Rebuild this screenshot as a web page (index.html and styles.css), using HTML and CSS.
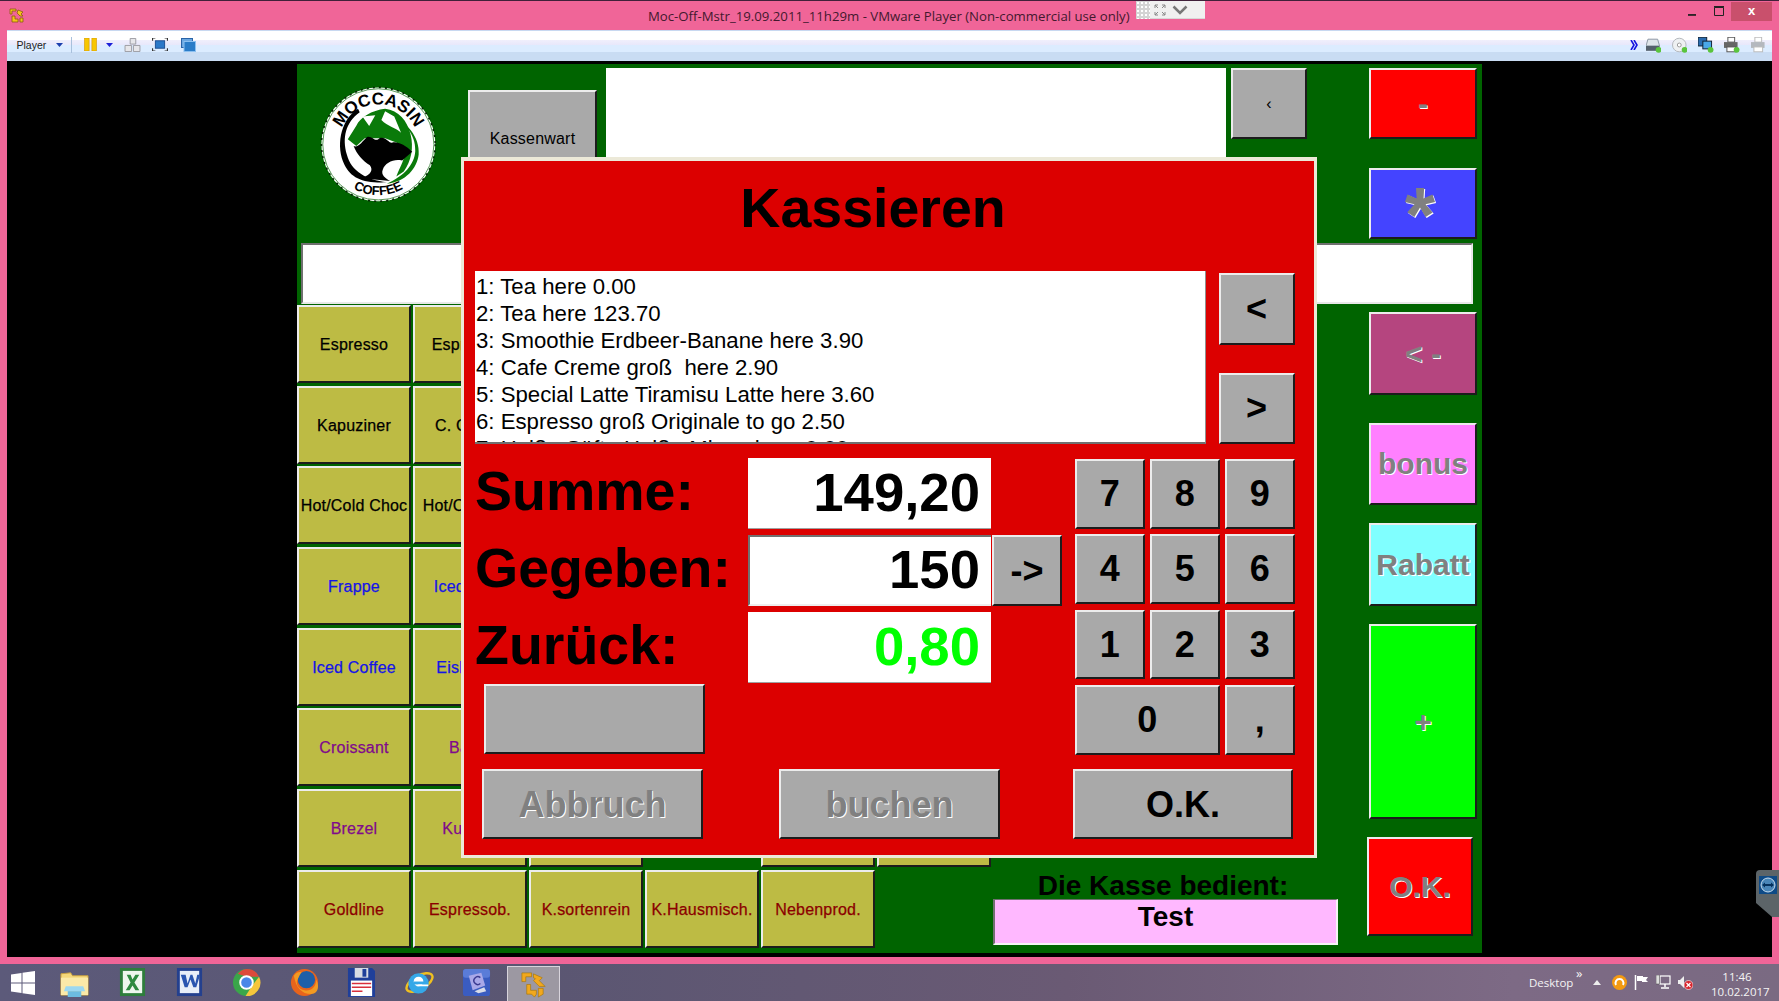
FILE: index.html
```html
<!DOCTYPE html>
<html lang="de">
<head>
<meta charset="utf-8">
<title>Kassieren</title>
<link rel="stylesheet" href="styles.css">
</head>
<body>
<div class="window">
  <header class="titlebar">
    <svg class="app-icon" viewBox="0 0 15 15"><path d="M1 1h6v2H3v3H1zM9 2l5 2-2 2 2 2h-3L8 5zM3 8h3v3h3v3H3zM11 10h3v4h-3z" fill="#f5c518" stroke="#8a5a10" stroke-width=".8"/></svg>
    <span class="title-text">Moc-Off-Mstr_19.09.2011_11h29m - VMware Player (Non-commercial use only)</span>
    <div class="win-controls">
      <svg class="win-min" viewBox="0 0 9 3"><rect width="9" height="2" y="1" fill="#222"/></svg>
      <svg class="win-max" viewBox="0 0 10 10"><path d="M.5 1.5h9v8h-9z" fill="none" stroke="#222"/><path d="M0 .5h10" stroke="#222" stroke-width="2"/></svg>
      <div class="win-close">x</div>
    </div>
    <div class="fs-widget">
      <div class="fs-grip"></div>
      <svg class="fs-expand" viewBox="0 0 12 12"><path d="M1 4V1h3M8 1h3v3M11 8v3H8M4 11H1V8M1 1l3 3M11 1L8 4M11 11L8 8M1 11l3-3" fill="none" stroke="#888"/></svg>
      <svg class="fs-chevron" viewBox="0 0 16 10"><path d="M1.500 1.500L8 8l6.500-6.500" fill="none" stroke="#777" stroke-width="2.500"/></svg>
    </div>
  </header>

  <nav class="toolbar">
    <span class="player-label">Player</span>
    <svg class="tb-caret" viewBox="0 0 7 4"><path d="M0 0h7L3.500 4z" fill="#1c3fae"/></svg>
    <span class="tb-sep"></span>
    <svg class="tb-pause" viewBox="0 0 13 14"><rect width="5" height="14" fill="#f7c600" stroke="#d09000" stroke-width=".6"/><rect x="8" width="5" height="14" fill="#f7c600" stroke="#d09000" stroke-width=".6"/></svg>
    <svg class="tb-caret tb-caret-2" viewBox="0 0 7 4"><path d="M0 0h7L3.500 4z" fill="#1c1fd8"/></svg>
    <svg class="tb-send" viewBox="0 0 17 15"><path d="M6 .5h6v6H6zM.5 8h7v6.500h-7zM9.500 8h7v6.500h-7z" fill="#e6e6ea" stroke="#9a9aa0"/></svg>
    <svg class="tb-full" viewBox="0 0 16 14"><rect x="3" y="3" width="10" height="8" fill="#2a78c8" stroke="#1b4c90"/><path d="M0 3V0h3M13 0h3v3M16 11v3h-3M3 14H0v-3" fill="none" stroke="#333" stroke-width="1.200"/></svg>
    <svg class="tb-unity" viewBox="0 0 15 14"><rect x=".5" y=".5" width="11" height="9" fill="#6aa6e0" stroke="#2a64a8"/><rect x="3" y="3.500" width="11.500" height="10" fill="#2a7cc8" stroke="#8cc0f0"/></svg>
    <div class="tb-right">
      <svg class="tb-more" viewBox="0 0 8 10"><path d="M1 0l3 5-3 5M4 0l3 5-3 5" fill="none" stroke="#1414e0" stroke-width="1.600"/></svg>
      <svg class="tb-dev" viewBox="0 0 16 16"><path d="M2 2h10l2 7H0z" fill="#dfe4ea" stroke="#8b97a3"/><rect y="9" width="14" height="5" fill="#55606c"/><circle cx="13" cy="13" r="3" fill="#5ac43c"/></svg>
      <svg class="tb-dev" viewBox="0 0 16 16"><circle cx="7.500" cy="8" r="7" fill="#eef0f2" stroke="#b4b8bc"/><circle cx="7.500" cy="8" r="2" fill="#fff" stroke="#999"/><circle cx="13" cy="13" r="3" fill="#5ac43c"/></svg>
      <svg class="tb-dev" viewBox="0 0 16 16"><rect width="9" height="9" fill="#2a6cb0" stroke="#123"/><rect x="5" y="4" width="9" height="8" fill="#4aa8e8" stroke="#123"/><circle cx="13" cy="13" r="3" fill="#5ac43c"/></svg>
      <svg class="tb-dev" viewBox="0 0 16 16"><rect x="4" y="0" width="7" height="5" fill="#fff" stroke="#555"/><rect y="5" width="14" height="6" fill="#666"/><rect x="3" y="10" width="9" height="5" fill="#fff" stroke="#555"/><circle cx="13" cy="13" r="3" fill="#5ac43c"/></svg>
      <svg class="tb-dev" viewBox="0 0 16 16"><rect x="4" y="0" width="7" height="5" fill="#fff" stroke="#bbb"/><rect y="5" width="14" height="6" fill="#b4b8be"/><rect x="3" y="10" width="9" height="5" fill="#fff" stroke="#bbb"/></svg>
    </div>
  </nav>

  <main class="screen">
    <div class="app">
      <section class="top-row">
        <div class="logo-cell">
          <svg class="logo" viewBox="0 0 120 120">
            <g transform="translate(-28,-23) scale(.33333)">
              <circle cx="265" cy="250" r="168" fill="#fff" stroke="#062a06" stroke-width="5" stroke-dasharray="6 12"/>
              <circle cx="265" cy="250" r="164" fill="none" stroke="#0a6a0a" stroke-width="2"/>
              <path id="logoTop" d="M147 250A118 118 0 0 1 383 250" fill="none"/>
              <path id="logoBottom" d="M115 250A150 150 0 0 0 415 250" fill="none"/>
              <text class="logo-text"><textPath href="#logoTop" startOffset="50%" text-anchor="middle">MOCCASIN</textPath></text>
              <text class="logo-text logo-text-small"><textPath href="#logoBottom" startOffset="50%" text-anchor="middle">COFFEE</textPath></text>
              <path d="M205 145C150 180 140 260 165 310C185 350 220 365 290 362C230 355 185 330 172 280C158 230 168 185 210 155Z" fill="#000"/>
              <path d="M290 160C350 180 388 230 384 280C380 320 345 362 290 366C340 345 372 310 374 270C376 220 340 180 290 160Z" fill="#0a7a0a"/>
              <path d="M175 235L200 195C212 170 245 150 285 145C325 150 350 180 360 220C370 260 362 300 340 330L318 345C332 310 345 290 340 278L320 245L285 232L225 232L200 255Z" fill="#0a7a0a"/>
              <path d="M218 168L238 196L256 164ZM274 178C292 198 318 200 332 216L312 168L285 152Z" fill="#fff"/>
              <path d="M192 255C205 262 218 240 232 228C248 224 256 246 268 232C285 225 295 246 305 245C320 240 345 252 365 272L335 298C310 292 285 305 278 325C272 340 285 350 300 358L215 350C245 340 250 325 240 312C218 298 202 280 192 255Z" fill="#000"/>
            </g>
          </svg>
        </div>
        <button class="btn gray kassenwart">Kassenwart</button>
        <div class="top-box"></div>
        <button class="btn gray back-btn">‹</button>
      </section>

      <aside class="rail rail-top">
        <button class="btn rail-btn red">-</button>
        <button class="btn rail-btn blue star">*</button>
      </aside>

      <div class="entry-field"></div>

      <section class="lower">
        <div class="products">
          <div class="prow"><button class="btn olive">Espresso</button><button class="btn olive">Espressos</button></div>
          <div class="prow"><button class="btn olive">Kapuziner</button><button class="btn olive">C. Crème</button></div>
          <div class="prow"><button class="btn olive">Hot/Cold Choc</button><button class="btn olive">Hot/Cold Tea</button></div>
          <div class="prow ink-blue"><button class="btn olive">Frappe</button><button class="btn olive">Iced Latte</button></div>
          <div class="prow ink-blue"><button class="btn olive">Iced Coffee</button><button class="btn olive">Eiskaffee</button></div>
          <div class="prow ink-purple"><button class="btn olive">Croissant</button><button class="btn olive">Bagel</button></div>
          <div class="prow ink-purple"><button class="btn olive">Brezel</button><button class="btn olive">Kuchen</button><button class="btn olive"></button><span class="pgap"></span><button class="btn olive"></button><button class="btn olive"></button></div>
          <div class="prow ink-red"><button class="btn olive">Goldline</button><button class="btn olive">Espressob.</button><button class="btn olive">K.sortenrein</button><button class="btn olive">K.Hausmisch.</button><button class="btn olive">Nebenprod.</button></div>
        </div>
        <div class="cashier">
          <div class="cashier-label">Die Kasse bedient:</div>
          <div class="cashier-name">Test</div>
        </div>
      </section>

      <aside class="rail rail-bottom">
        <button class="btn rail-btn plum">&lt; -</button>
        <button class="btn rail-btn pink">bonus</button>
        <button class="btn rail-btn cyan">Rabatt</button>
        <button class="btn rail-btn lime">+</button>
        <button class="btn rail-btn red ok">O.K.</button>
      </aside>

      <div class="dialog">
        <h1 class="dialog-title">Kassieren</h1>
        <div class="list-row">
          <div class="receipt">
            <div>1: Tea here 0.00</div>
            <div>2: Tea here 123.70</div>
            <div>3: Smoothie Erdbeer-Banane here 3.90</div>
            <div>4: Cafe Creme groß&nbsp; here 2.90</div>
            <div>5: Special Latte Tiramisu Latte here 3.60</div>
            <div>6: Espresso groß Originale to go 2.50</div>
            <div>7: Heiße Säfte Heiße Minze here 0.00</div>
          </div>
          <div class="pager">
            <button class="btn gray big">&lt;</button>
            <button class="btn gray big">&gt;</button>
          </div>
        </div>
        <div class="form">
          <div class="amounts">
            <div class="amount-row"><span class="amount-label">Summe:</span><span class="amount">149,20</span></div>
            <div class="amount-row"><span class="amount-label">Gegeben:</span><span class="amount active">150</span><button class="btn gray big arrow">-&gt;</button></div>
            <div class="amount-row"><span class="amount-label">Zurück:</span><span class="amount change">0,80</span></div>
            <button class="btn gray blank"></button>
          </div>
          <div class="numpad">
            <button class="btn gray big">7</button><button class="btn gray big">8</button><button class="btn gray big">9</button>
            <button class="btn gray big">4</button><button class="btn gray big">5</button><button class="btn gray big">6</button>
            <button class="btn gray big">1</button><button class="btn gray big">2</button><button class="btn gray big">3</button>
            <button class="btn gray big zero">0</button><button class="btn gray big">,</button>
          </div>
        </div>
        <div class="actions">
          <button class="btn gray big disabled">Abbruch</button>
          <button class="btn gray big disabled">buchen</button>
          <button class="btn gray big confirm">O.K.</button>
        </div>
      </div>
    </div>
    <div class="tv-tab">
      <svg class="tv-icon" viewBox="0 0 18 18"><rect width="18" height="18" fill="#0e4a86"/><circle cx="9" cy="9" r="7" fill="#4a86b8" stroke="#c8dcec"/><path d="M3 9l3-2.500v1.500h6V6.500L15 9l-3 2.500V10H6v1.500z" fill="#06325e"/></svg>
    </div>
  </main>
</div>

<footer class="taskbar">
  <div class="task task-start"><svg class="ti" viewBox="0 0 24 24"><path d="M0 3.500L10.500 2v9.500H0zM11.500 1.800L24 0v11.500H11.500zM0 12.500h10.500V22L0 20.500zM11.500 12.500H24V24l-12.500-1.800z" fill="#fff"/></svg></div>
  <div class="task"><svg class="ti" viewBox="0 0 30 30"><path d="M1 6l10-1 2 3h16v20H1z" fill="#f5d77a" stroke="#c9a040"/><rect x="1" y="10" width="28" height="18" fill="#fbe9a8"/><path d="M6 19h18l2 5H4z" fill="#9cd8f0"/><rect x="8" y="24" width="14" height="6" fill="#6cbce0"/></svg></div>
  <div class="task"><svg class="ti" viewBox="0 0 26 30"><rect width="26" height="29" fill="#2e7d3c"/><rect x="3" y="3" width="20" height="23" fill="#eef6ee"/><path d="M7 7h4l2 5 3-5h4l-5 8 5 8h-4l-3-5-3 5H6l5-8z" fill="#2e8a40"/></svg></div>
  <div class="task"><svg class="ti" viewBox="0 0 26 30"><rect width="26" height="29" fill="#24408e"/><rect x="3" y="3" width="20" height="23" fill="#e8eef8"/><path d="M4 7h5l2 9 3-9h2l3 9 2-9h3l-4 13h-3l-3-8-3 8H8z" fill="#2a55b0"/></svg></div>
  <div class="task"><svg class="ti" viewBox="0 0 30 30"><circle cx="15" cy="15" r="14" fill="#3aa64a"/><path d="M15 1A14 14 0 0 1 28 9H15L6 6A14 14 0 0 1 15 1z" fill="#dd4a3c"/><path d="M28 9A14 14 0 0 1 14 29l7-11z" fill="#f6c63c"/><circle cx="15" cy="15" r="6.500" fill="#4a86e8" stroke="#fff" stroke-width="2"/></svg></div>
  <div class="task"><svg class="ti" viewBox="0 0 30 30"><circle cx="15" cy="15" r="14" fill="#e8641c"/><circle cx="17" cy="12" r="9" fill="#1f5fa8"/><path d="M4 8c2 12 8 19 18 19 4 0 7-3 7-8 0-3-1-5-2-7 0 9-6 12-12 11-6-1-8-5-8-9 2-5 4-8 5-10-3 0-6 1-8 4z" fill="#f39a22"/></svg></div>
  <div class="task"><svg class="ti" viewBox="0 0 30 30"><path d="M1 0h25l3 3v27H1z" fill="#1f3f9a"/><rect x="8" y="0" width="14" height="10" fill="#d8dce4"/><rect x="16" y="1" width="4" height="8" fill="#1f3f9a"/><rect x="4" y="13" width="22" height="16" fill="#fff"/><path d="M5 16h20M5 20h20M5 24h11" stroke="#d8303c" stroke-width="1.600"/></svg></div>
  <div class="task"><svg class="ti" viewBox="0 0 30 30"><ellipse cx="15" cy="15" rx="15" ry="7" transform="rotate(-30 15 15)" fill="none" stroke="#f0c020" stroke-width="2.500"/><circle cx="14" cy="16" r="10.500" fill="#35a8e8"/><circle cx="14" cy="14" r="5" fill="#fff"/><rect x="9" y="14" width="14" height="3" fill="#35a8e8"/><path d="M14 17h10v2H12z" fill="#fff"/></svg></div>
  <div class="task"><svg class="ti" viewBox="0 0 30 30"><rect x="1" y="1" width="28" height="28" rx="3" fill="#3a5cc0"/><rect x="1" y="1" width="28" height="9" rx="3" fill="#5a7cd8"/><path d="M7 8l13-3 4 13-13 5z" fill="#a8a8e8"/><path d="M19 10a4 4 0 1 0 0 6" fill="none" stroke="#3a3a90" stroke-width="1.500"/><path d="M13 24l10-4 2 4-8 2z" fill="#d8dce8"/></svg></div>
  <div class="task task-active"><svg class="ti" viewBox="0 0 30 30"><path d="M3 3h10v4H7v5H3zM15 4l9 4-3 3 6 6h-6l-6-6 2-2-2-1zM8 15h4v6h6v4l-2 3-3-3H8zM20 19h5v6l-5 3z" fill="#f2a81c" stroke="#a8780c" stroke-width=".7"/></svg></div>
  <div class="tray">
    <span class="tray-desktop">Desktop</span>
    <span class="tray-more">»</span>
    <svg class="tray-caret" viewBox="0 0 8 5"><path d="M0 5L4 0l4 5z" fill="#eee"/></svg>
    <svg class="tray-icon" viewBox="0 0 15 15"><circle cx="7.500" cy="7.500" r="7.500" fill="#f39a12"/><path d="M4 10a4 4 0 1 1 7 0" fill="none" stroke="#fff" stroke-width="2"/></svg>
    <svg class="tray-icon" viewBox="0 0 15 15"><path d="M1.500 0v15" stroke="#fff" stroke-width="1.500"/><path d="M3 1h6v1h5l-2 3 2 2H8V6H3z" fill="#fff"/></svg>
    <svg class="tray-icon" viewBox="0 0 15 15"><rect x="4" y="1" width="10" height="8" fill="none" stroke="#fff" stroke-width="1.200"/><path d="M9 9v3M5 13h8" stroke="#fff" stroke-width="1.500"/><rect y="0" width="3.500" height="9" fill="#ddd" stroke="#444" stroke-width=".5"/></svg>
    <svg class="tray-icon" viewBox="0 0 15 15"><path d="M0 5h2l4-4v12L2 9H0z" fill="#eee"/><circle cx="10.500" cy="10" r="4.500" fill="#d8242c" stroke="#fff" stroke-width=".6"/><path d="M8.500 8l4 4M12.500 8l-4 4" stroke="#fff" stroke-width="1.200"/></svg>
    <div class="clock"><div>11:46</div><div>10.02.2017</div></div>
  </div>
</footer>
</body>
</html>
```

FILE: styles.css
```css
* { box-sizing: border-box; }
html, body { margin: 0; padding: 0; }
body {
  width: 1779px;
  height: 1001px;
  overflow: hidden;
  font-family: "Liberation Sans", Arial, sans-serif;
  background: #5c5a78;
}

/* VMware window */
.window {
  height: 964px;
  background: #f06598;
  border-top: 1px solid #40203a;
  padding: 0 7px 7px;
  display: flex;
  flex-direction: column;
}
.titlebar {
  height: 29px;
  flex: none;
  display: flex;
  align-items: center;
  position: relative;
}
.app-icon { width: 15px; height: 15px; margin: 0 0 0 2px; }
.title-text {
  margin-left: 624px;
  margin-top: 1px;
  font-family: "Open Sans", sans-serif;
  font-size: 13.200px;
  color: #43192e;
  white-space: nowrap;
}
.win-controls {
  margin-left: auto;
  margin-top: -9px;
  display: flex;
  align-items: center;
  height: 19px;
}
.win-min { width: 8px; height: 3px; margin-top: 6px; }
.win-max { width: 10px; height: 10px; margin-left: 18px; }
.win-close {
  width: 41px;
  height: 19px;
  margin-left: 7px;
  background: #c9506c;
  color: #fff;
  font-size: 13px;
  font-weight: bold;
  text-align: center;
  line-height: 17px;
}
.fs-widget {
  position: absolute;
  left: 1129px;
  top: 0;
  width: 69px;
  height: 18px;
  background: #f0f0f0;
  border-bottom: 1px solid #d8d8d8;
  display: flex;
  align-items: center;
}
.fs-grip {
  width: 14px;
  height: 18px;
  background-color: #d4d4d4;
  background-image: radial-gradient(#fff 1px, transparent 1.2px);
  background-size: 4px 4px;
}
.fs-expand { width: 12px; height: 12px; margin-left: 4px; }
.fs-chevron { width: 16px; height: 10px; margin-left: 6px; }

.toolbar {
  height: 31px;
  flex: none;
  display: flex;
  align-items: center;
  border-top: 1px solid #c8d8f0;
  padding: 0 6px 3px 0;
  background: linear-gradient(#fff 0, #fff 9px, #f0effc 9px, #e8e8fb 14px, #dcecff 14px, #dcecff 21px, #c9dcf3 21px);
}
.player-label { font-size: 10.500px; color: #222; margin-left: 9.500px; width: 30px; }
.tb-caret { width: 7px; height: 4px; margin-left: 9px; }
.tb-caret-2 { margin-left: 9px; }
.tb-sep { width: 1px; height: 16px; background: #a8c0dc; margin-left: 8.500px; }
.tb-pause { width: 13px; height: 13px; margin-left: 12px; }
.tb-send { width: 17px; height: 14px; margin-left: 11px; }
.tb-full { width: 16px; height: 13px; margin-left: 11px; }
.tb-unity { width: 15px; height: 14px; margin-left: 13px; }
.tb-right { margin-left: auto; display: flex; align-items: center; gap: 10.700px; }
.tb-more { width: 8px; height: 10px; margin-right: -3px; }
.tb-dev { width: 15.500px; height: 16px; }

/* Guest screen */
.screen {
  flex: 1;
  background: #000;
  padding: 3px 0 4px 290px;
  position: relative;
}
.app {
  width: 1185px;
  height: 889px;
  background: #006400;
  position: relative;
  display: grid;
  grid-template-columns: 1072px 113px;
  grid-template-rows: 179px 61px 649px;
}

.btn {
  display: flex;
  align-items: center;
  justify-content: center;
  margin: 0;
  padding: 0;
  font-family: inherit;
  color: inherit;
  border-style: solid;
  border-width: 2px;
  border-color: #ececec #1c1c1c #1c1c1c #ececec;
  white-space: nowrap;
}
.gray { background: #a9a9a9; color: #000; }
.big { font-size: 36px; font-weight: bold; }

.top-row { display: flex; align-items: flex-start; overflow: hidden; }
.logo-cell { width: 171px; flex: none; padding: 19px 0 0 20px; }
.logo { width: 122px; height: 122px; display: block; overflow: visible; }
.logo-text { font-family: "Liberation Sans", sans-serif; font-weight: bold; font-size: 50px; fill: #000; }
.logo-text-small { font-size: 38px; }
.kassenwart { width: 129px; height: 97px; margin-top: 26px; font-size: 16px; letter-spacing: .2px; flex: none; }
.top-box { width: 620px; height: 110px; margin: 4px 0 0 9px; background: #fff; flex: none; }
.back-btn { width: 76px; height: 71px; margin: 4px 0 0 5px; font-size: 16px; flex: none; }

.rail { display: flex; flex-direction: column; width: 108px; }
.rail-top { padding-top: 4px; gap: 29px; }
.rail-bottom { padding-top: 8px; }
.rail-btn {
  width: 108px;
  font-size: 30px;
  font-weight: bold;
  color: #808080;
  text-shadow: 1px 1px 0 #fff;
  flex: none;
}
.rail-top .rail-btn { height: 71px; }
.red { background: #ff0000; }
.blue { background: #4444ff; }
.rail-top .star { font-size: 78px; line-height: 71px; padding: 24px 6px 0 0; }
.plum { background: #b5457f; height: 83px; }
.pink { background: #ff80ff; height: 82px; margin-top: 28px; }
.cyan { background: #80ffff; height: 83px; margin-top: 18px; }
.lime { background: #00ff00; height: 195px; margin-top: 18px; }
.ok { width: 106px; height: 99px; margin: 18px 0 0 -2px; }

.entry-field {
  grid-column: 1 / 3;
  margin-left: 4px;
  width: 1172px;
  background: #fff;
  border-style: solid;
  border-width: 2px;
  border-color: #707070 #e8e8e8 #e8e8e8 #707070;
}

.lower { display: flex; align-items: flex-end; }
.products {
  width: 696px;
  flex: none;
  padding-top: 1px;
  align-self: flex-start;
  display: flex;
  flex-direction: column;
  gap: 2.700px;
}
.prow { display: flex; gap: 2px; height: 78px; }
.prow .btn {
  width: 114px;
  padding-top: 2px;
  font-size: 16px;
  letter-spacing: .2px;
  -webkit-text-stroke: .25px;
  flex: none;
}
.olive { background: #bdbb44; color: #000; }
.pgap { width: 114px; flex: none; }
.ink-blue .btn { color: #1414e6; }
.ink-purple .btn { color: #800a8c; }
.ink-red .btn { color: #8b0000; }

.cashier { width: 345px; margin: 0 0 8px 0; flex: none; }
.cashier-label { height: 32px; font-size: 28px; font-weight: bold; line-height: 37px; text-align: center; margin-right: 5px; color: #000; }
.cashier-name {
  height: 46px;
  background: #ffb8ff;
  font-size: 28px;
  font-weight: bold;
  text-align: center;
  line-height: 34px;
  color: #000;
  border-style: solid;
  border-width: 1px 2px 2px 2px;
  border-color: #707070 #f4f4f4 #f4f4f4 #707070;
}

/* Payment dialog */
.dialog {
  position: absolute;
  left: 164px;
  top: 93px;
  width: 856px;
  height: 701px;
  background: #dc0000;
  border-style: solid;
  border-width: 4px 3px 3px;
  border-color: #ece9d8;
  color: #000;
}
.dialog-title {
  margin: 0 0 18px;
  width: 818px;
  height: 92px;
  font-size: 55.500px;
  line-height: 94px;
  font-weight: bold;
  text-align: center;
}
.list-row { display: flex; margin-left: 11px; height: 173px; }
.receipt {
  width: 731px;
  height: 173px;
  flex: none;
  overflow: hidden;
  background: #fff;
  font-size: 22.200px;
  line-height: 27px;
  padding: 2px 0 0 1px;
  border-bottom: 2px solid #707070;
  border-right: 1px solid #909090;
  white-space: nowrap;
}
.pager {
  width: 76px;
  margin-left: 12.500px;
  padding-top: 2px;
  display: flex;
  flex-direction: column;
  gap: 28px;
}
.pager .btn { height: 71.500px; }

.form { display: flex; margin-top: 14px; padding-left: 11px; }
.amounts { width: 600px; flex: none; display: flex; flex-direction: column; gap: 6px; }
.amount-row { display: flex; height: 71px; }
.amount-label {
  width: 273px;
  height: 71px;
  font-size: 55.500px;
  font-weight: bold;
  line-height: 67px;
  white-space: nowrap;
}
.amount {
  width: 243px;
  height: 71px;
  background: #fff;
  font-size: 54.500px;
  font-weight: bold;
  line-height: 69px;
  text-align: right;
  padding-right: 11px;
  border-bottom: 1px solid #a0a0a0;
}
.amount.active { border-style: solid; border-width: 2px 0 2px 2px; border-color: #707070 #fff #eee #707070; line-height: 65px; }
.change { color: #00ff00; }
.arrow { width: 70px; margin-left: 1px; }
.blank { width: 221px; height: 70px; margin: -5px 0 0 9px; }
.numpad {
  display: grid;
  grid-template-columns: repeat(3, 69.500px);
  grid-auto-rows: 69.700px;
  column-gap: 5.500px;
  row-gap: 5.700px;
  margin-top: 1px;
}
.zero { grid-column: span 2; }

.actions { display: flex; gap: 76px; margin-top: 14px; padding: 0 20px 0 18px; }
.actions .btn { width: 221px; height: 70px; padding-top: 2px; flex: none; }
.disabled { color: #808080; text-shadow: 1px 1px 0 #fff; }
.actions .confirm { margin-left: -3px; width: 220px; }

.tv-tab {
  position: absolute;
  right: -7px;
  top: 809px;
  width: 23px;
  height: 47px;
  background: #5c6468;
  border-radius: 4px 0 0 0;
  clip-path: polygon(0 0, 100% 0, 100% 100%, 70% 100%, 0 70%);
  padding: 6px 0 0 3px;
}
.tv-icon { width: 18px; height: 18px; display: block; }

/* Taskbar */
.taskbar {
  height: 37px;
  display: flex;
  align-items: center;
  background: linear-gradient(90deg, #5c5a7a 0, #5a5672 30%, #6a5a74 60%, #7d6a85 85%, #7a6a82 100%);
  color: #f4f4f4;
}
.task { width: 57.400px; height: 37px; display: flex; align-items: center; justify-content: center; flex: none; }
.task-start { width: 46px; }
.task-active {
  margin-left: 2px;
  width: 53px;
  height: 35px;
  margin-top: 2px;
  background: #9c98a2;
  border: 1px solid #d8d4dc;
  border-bottom: 0;
}
.ti { width: 29px; height: 29px; }
.task-start .ti { width: 24px; height: 24px; }
.tray { margin-left: auto; display: flex; align-items: center; height: 37px; font-family: "Open Sans", sans-serif; font-size: 11.500px; position: relative; padding-right: 16px; }
.tray-desktop { width: 47px; margin-left: 1px; }
.tray-more { width: 17px; margin-top: -20px; font-size: 13px; line-height: 14px; }
.tray-caret { width: 8px; height: 5px; margin-right: 11px; }
.tray-icon { width: 15px; height: 15px; margin-right: 7px; }
.clock { width: 52px; margin-left: 11px; text-align: center; line-height: 15px; font-size: 11.500px; margin-top: 2px; }
```
